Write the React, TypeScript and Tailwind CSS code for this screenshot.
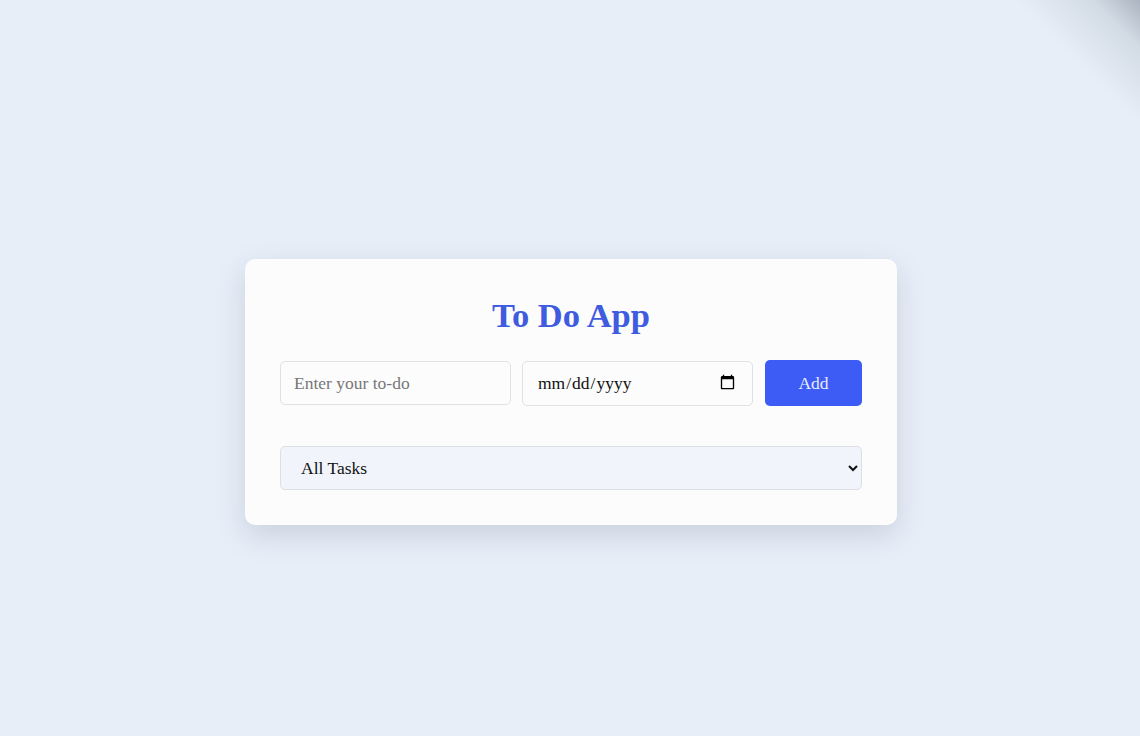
import React from "react";

export default function App() {
  return (
    <div className="relative min-h-[736px] w-full overflow-hidden bg-[#e7eef8] flex justify-center pt-[259px]" style={{ fontFamily: '"Liberation Serif", "Times New Roman", serif' }}>
      <div className="pointer-events-none absolute right-0 top-0 h-[240px] w-[240px] bg-[linear-gradient(to_bottom_left,rgba(150,160,172,0.75)_0%,rgba(180,190,200,0.4)_10%,rgba(231,238,248,0)_26%)]" />
      <div className="ml-[2px] w-[652px] h-[266px] rounded-[10px] bg-[#fcfcfd] shadow-[0_10px_28px_rgba(100,110,130,0.22)] px-[35px] pt-[36px]">
        <h1 className="text-center text-[34.5px] leading-[40px] font-bold text-[#3f5be0]">To Do App</h1>
        <div className="mt-[25px] flex items-center gap-[11px]">
          <input
            type="text"
            placeholder="Enter your to-do"
            className="h-[44px] w-[231px] rounded-[5px] border border-[#dfe1e5] bg-[#fcfcfd] px-[13px] text-[17.5px] text-[#222] placeholder:text-[#777] outline-none"
          />
          <input
            type="date"
            className="h-[45px] w-[231px] rounded-[5px] border border-[#dfe1e5] bg-[#fcfcfd] px-[14px] text-[17.5px] text-[#111] outline-none"
          />
          <button className="ml-[1px] h-[46px] flex-1 rounded-[5px] bg-[#3d5bf5] text-[17.5px] text-[#e8ecff]">Add</button>
        </div>
        <select className="mt-[40px] h-[44px] w-full rounded-[5px] border border-[#dcdfe5] bg-[#f1f4fb] pl-[16px] pr-[6px] text-[17.5px] text-[#111] outline-none">
          <option>All Tasks</option>
          <option>Completed</option>
          <option>Pending</option>
        </select>
      </div>
    </div>
  );
}
